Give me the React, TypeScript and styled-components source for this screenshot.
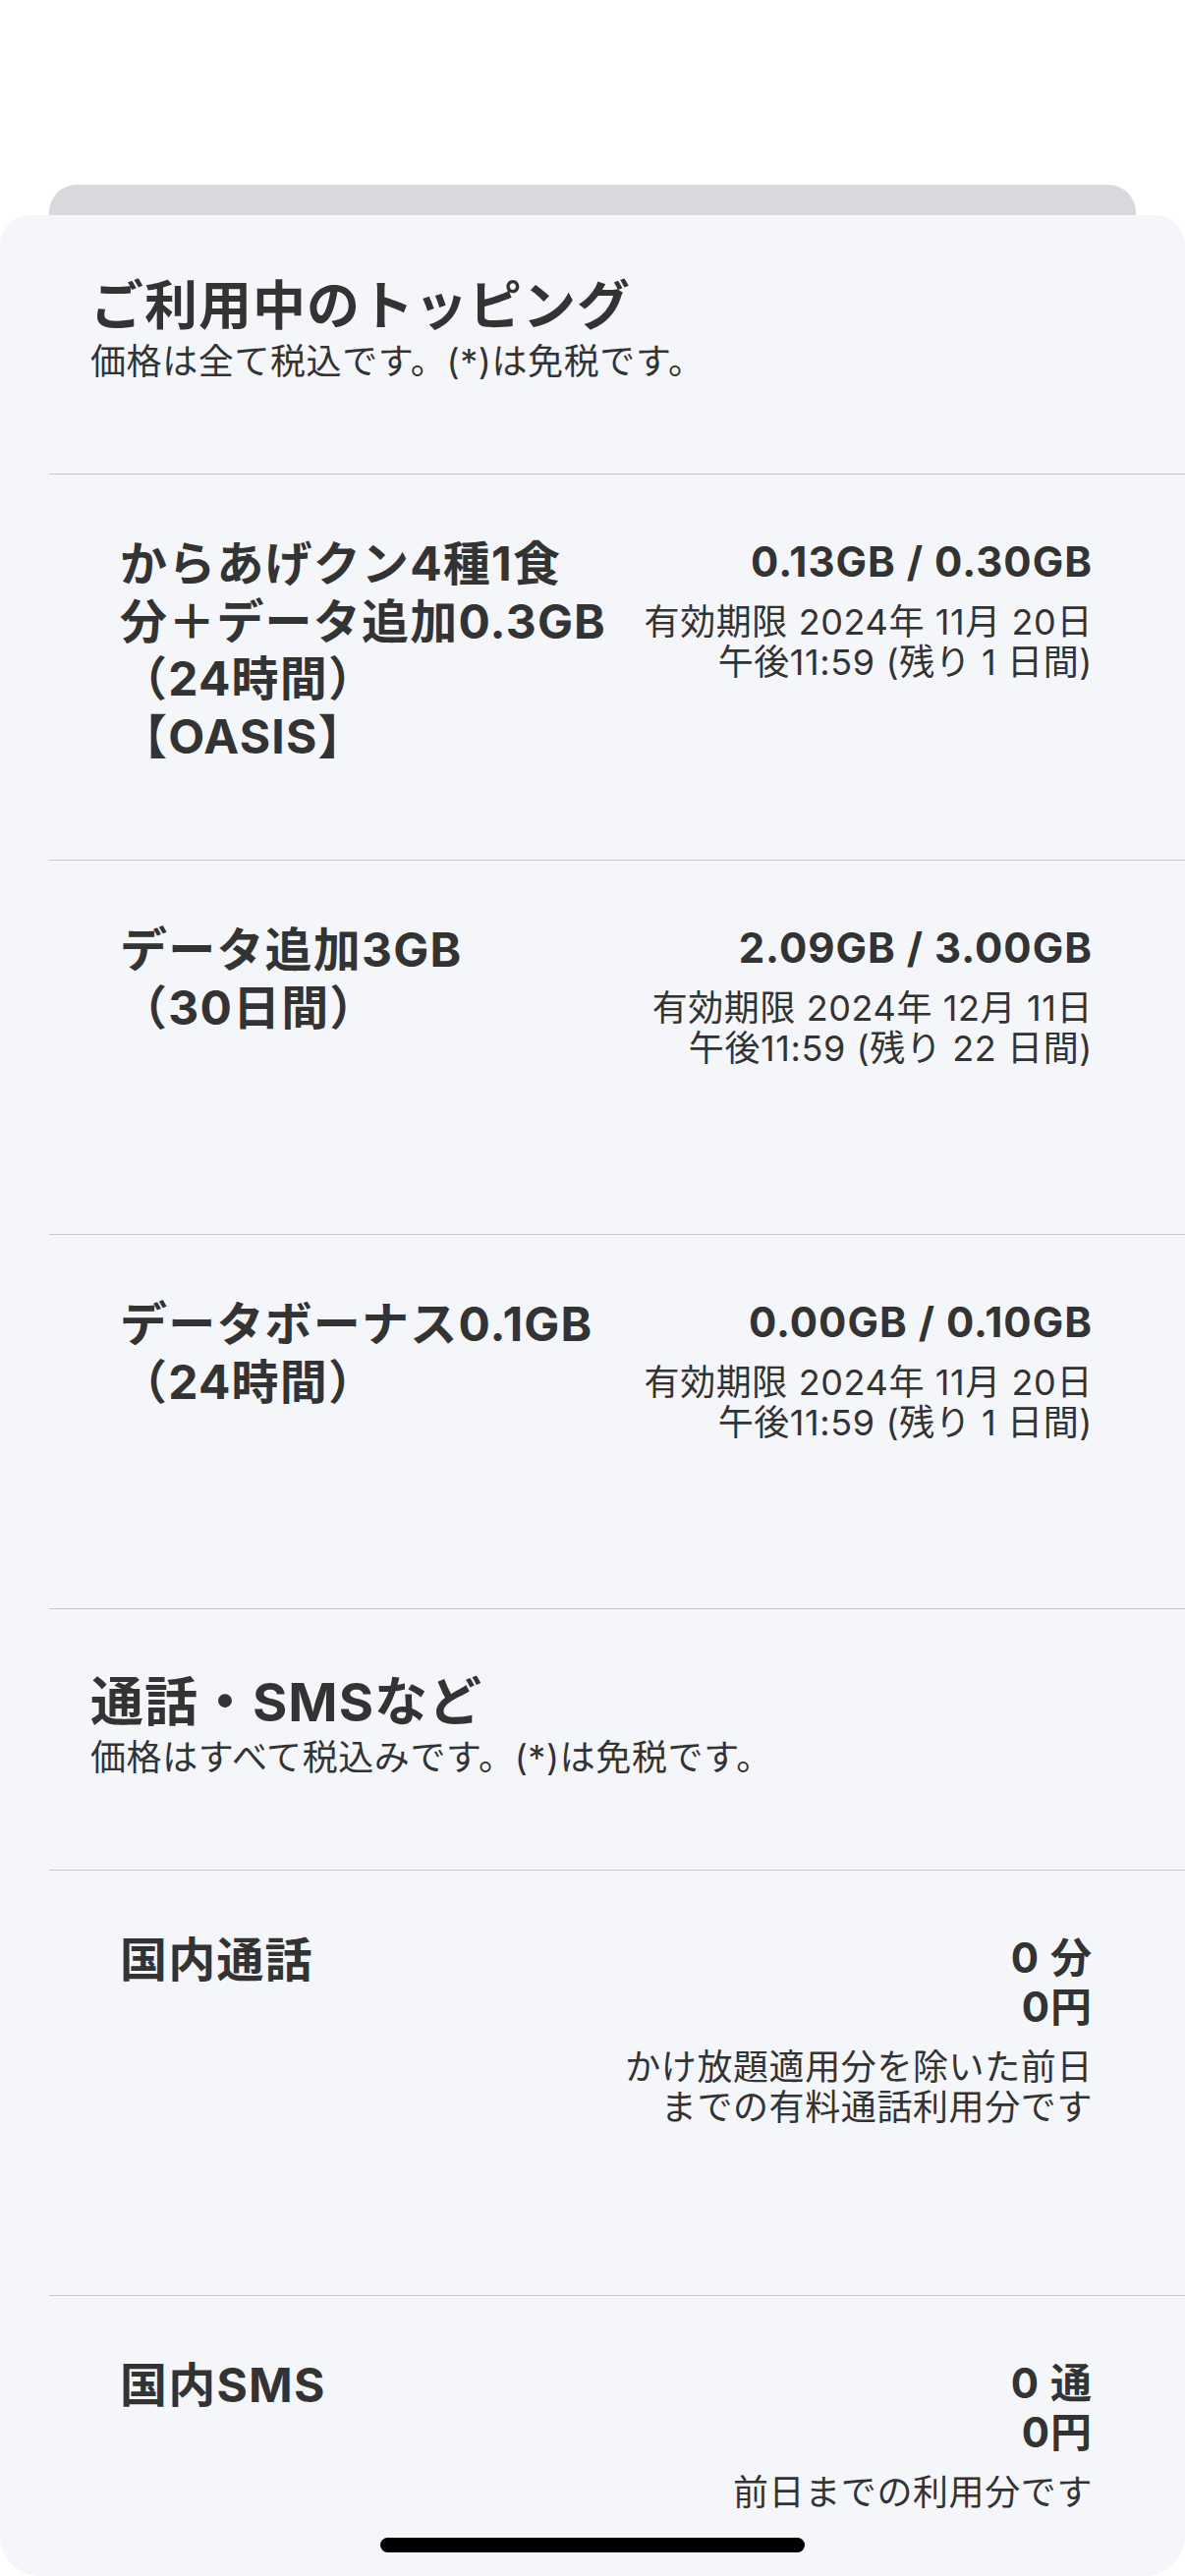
import React from "react"
import styled, { createGlobalStyle } from "styled-components"

const GlobalStyle = createGlobalStyle`
	* {
		box-sizing: border-box;
	}
	html, body {
		margin: 0;
		padding: 0;
		background: #ffffff;
	}
	body {
		font-family: Inter, "Noto Sans CJK JP", sans-serif;
		color: #333333;
		-webkit-font-smoothing: antialiased;
	}
`

type Topping = {
	name: string[]
	used: string
	date: string
	time: string
}

type Usage = {
	name: string
	amount: string
	price: string
	note: string
}

const toppings: Topping[] = [
	{
		name: ["からあげクン4種1食", "分＋データ追加0.3GB", "（24時間）", "【OASIS】"],
		used: "0.13GB / 0.30GB",
		date: "有効期限 2024年 11月 20日",
		time: "午後11:59 (残り 1 日間)",
	},
	{
		name: ["データ追加3GB", "（30日間）"],
		used: "2.09GB / 3.00GB",
		date: "有効期限 2024年 12月 11日",
		time: "午後11:59 (残り 22 日間)",
	},
	{
		name: ["データボーナス0.1GB", "（24時間）"],
		used: "0.00GB / 0.10GB",
		date: "有効期限 2024年 11月 20日",
		time: "午後11:59 (残り 1 日間)",
	},
]

const usages: Usage[] = [
	{ name: "国内通話", amount: "0 分", price: "0円", note: "かけ放題適用分を除いた前日までの有料通話利用分です" },
	{ name: "国内SMS", amount: "0 通", price: "0円", note: "前日までの利用分です" },
]

const App = () => {
	return (
		<Page>
			<GlobalStyle />
			<TopSpace />
			<BackCard />
			<Sheet>
				<List>
					<Header $top={61}>
						<Title>ご利用中のトッピング</Title>
						<Subtitle>価格は全て税込です。(*)は免税です。</Subtitle>
					</Header>
					{toppings.map((t, i) => (
						<Item key={i} $minHeight={381}>
							<Name>
								{t.name.map((line, j) => (
									<Line key={j}>{line}</Line>
								))}
							</Name>
							<Values>
								<Amount>{t.used}</Amount>
								<Detail>
									<Line>{t.date}</Line>
									<Line>{t.time}</Line>
								</Detail>
							</Values>
						</Item>
					))}
					<Header $top={63}>
						<Title>通話・SMSなど</Title>
						<Subtitle>価格はすべて税込みです。(*)は免税です。</Subtitle>
					</Header>
					{usages.map((u, i) => (
						<Item key={i} $minHeight={433}>
							<Name>{u.name}</Name>
							<Values>
								<Amount>{u.amount}</Amount>
								<Amount>{u.price}</Amount>
								<Detail>{u.note}</Detail>
							</Values>
						</Item>
					))}
				</List>
			</Sheet>
			<HomeIndicator />
		</Page>
	)
}

export default App

const Page = styled.div`
	position: relative;
	height: 2622px;
	overflow: hidden;
	display: flex;
	flex-direction: column;
	background: #ffffff;
`

const TopSpace = styled.div`
	height: 188px;
	flex-shrink: 0;
`

const BackCard = styled.div`
	height: 31px;
	flex-shrink: 0;
	margin: 0 50px;
	background: #d8d9dd;
	border-radius: 28px 28px 0 0;
`

const Sheet = styled.div`
	flex: 1;
	background: #f5f6fa;
	border-radius: 30px 30px 40px 40px;
	overflow: hidden;
`

const List = styled.div`
	margin-left: 50px;
`

const Header = styled.div<{ $top: number }>`
	padding: ${(props) => props.$top}px 0 92px 42px;
	border-bottom: 1px solid #c8c8cc;
`

const Title = styled.h2`
	margin: 0;
	font-size: 54px;
	line-height: 64px;
	font-weight: 700;
	letter-spacing: 1px;
	color: #333333;
`

const Subtitle = styled.p`
	margin: 3px 0 0;
	font-size: 36px;
	line-height: 43px;
	font-weight: 400;
	letter-spacing: 0.6px;
	color: #333333;
`

const Item = styled.div<{ $minHeight: number }>`
	display: grid;
	grid-template-columns: minmax(0, 1fr) minmax(0, 1fr);
	align-items: start;
	min-height: ${(props) => props.$minHeight}px;
	padding: 60px 94px 96px 72px;
	border-bottom: 1px solid #c8c8cc;
`

const Name = styled.div`
	margin-top: 2px;
	font-size: 48px;
	line-height: 58.5px;
	font-weight: 700;
	letter-spacing: 1.2px;
	color: #333333;
`

const Line = styled.span`
	display: block;
	white-space: nowrap;
`

const Values = styled.div`
	margin-top: 4px;
	text-align: right;
`

const Amount = styled.div`
	font-size: 42px;
	line-height: 50px;
	font-weight: 700;
	letter-spacing: 1px;
	color: #333333;
`

const Detail = styled.div`
	margin-top: 16px;
	font-size: 36px;
	line-height: 41px;
	font-weight: 400;
	letter-spacing: 0.6px;
	color: #333333;
`

const HomeIndicator = styled.div`
	position: absolute;
	left: 50%;
	bottom: 24px;
	width: 432px;
	height: 15px;
	margin-left: -216px;
	border-radius: 8px;
	background: #000000;
`
